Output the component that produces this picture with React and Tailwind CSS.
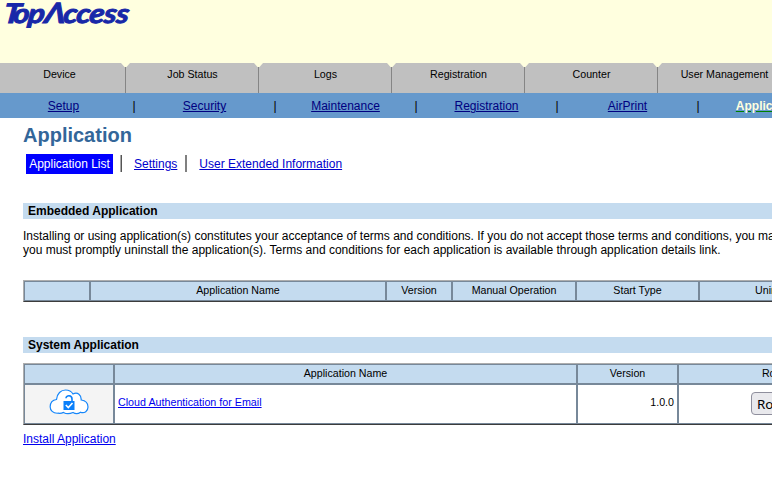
const tabs = ['Device', 'Job Status', 'Logs', 'Registration', 'Counter', 'User Management'];
const menu = ['Setup', 'Security', 'Maintenance', 'Registration', 'AirPrint'];

function Logo() {
  return (
    <svg className="block overflow-visible" width="140" height="34" role="img" aria-label="TopAccess">
      <g fill="#1828a8" stroke="#1828a8" strokeWidth="1" fontFamily="Lato, sans-serif" fontWeight="700" fontStyle="italic" transform="translate(0 23.3) skewX(-7) scale(1.15 1)">
        <text fontSize="27" x="2.6 10.8 23.8">Top</text>
        <text fontSize="28" x="38">Λ</text>
        <text fontSize="27" x="54.3 65.6 77 89.8 100.5">ccess</text>
      </g>
    </svg>
  );
}

function Tab({ label }) {
  return (
    <div className="relative w-[133px] shrink-0 h-[30px] bg-[#c0c0c0] border-r border-[#858585] text-center text-[10.67px] leading-[12px] pt-[5px] pl-px whitespace-nowrap">
      {label}
      <svg className="absolute top-0 -right-[5px] z-10" width="9" height="4" viewBox="0 0 9 4">
        <path d="M0 0H9L5.5 4H3.5Z" fill="#ffffdf" />
      </svg>
    </div>
  );
}

function CloudIcon() {
  return (
    <svg width="40" height="26" viewBox="0 0 40 26" fill="none">
      <path d="M9 24.2C4 24.6 1 21 1.2 17.5C1.3 13.5 4 11 7.5 10.5C8 4.5 12 1 16.5 1C20 1 22.5 2.5 24 5C28.5 2.5 32.5 6 32.2 11C36 11.5 39 14 39 18C39 22 35.5 24.8 31.5 23.2C29 25 26.5 25 24 23.5C20 25.3 17 25 14.5 23.4C13 24.2 11 24.5 9 24.2Z" fill="#fff" stroke="#1687fa" strokeWidth="1.2" />
      <path d="M17 9.2C17.2 5.8 23 6 23 10V13" stroke="#0b80fa" strokeWidth="1.6" />
      <rect x="14.5" y="12" width="11" height="9" fill="#0b80fa" />
      <path d="M16.8 16L19.3 18.5L23.5 14" stroke="#fff" strokeWidth="1.6" />
    </svg>
  );
}

function Section({ children }) {
  return <h2 className="h-4 bg-[#c4dbef] pl-[5px] text-[12px] leading-4 font-bold">{children}</h2>;
}

const frame = 'border border-t-[#adadad] border-l-[#adadad] border-b-[#3c3c3c] border-r-[#3c3c3c] w-fit';
const cell = 'border border-[#778899] shrink-0 flex items-center whitespace-nowrap';
const head = 'h-5 justify-center bg-[#c4dbef]';

function Head({ width, children }) {
  return <div className={`${cell} ${head} ${width}`}><span className="relative -top-px">{children}</span></div>;
}

export default function App() {
  return (
    <div className="w-[772px] h-[477px] overflow-hidden bg-white text-black font-['Liberation_Sans',Arial,sans-serif]">
      <header className="h-[63px] bg-[#ffffdf]">
        <Logo />
      </header>
      <nav className="flex -ml-[7px]">
        {tabs.map((t) => <Tab key={t} label={t} />)}
      </nav>
      <nav className="flex h-[25px] bg-[#6699cc] text-[12px] leading-[26px] whitespace-nowrap">
        {menu.map((m) => (
          <div key={m} className="flex shrink-0">
            <div className="w-[127px] text-center"><a className="underline text-[#000080]">{m}</a></div>
            <div className="w-[14px] text-center">|</div>
          </div>
        ))}
        <div className="w-[127px] shrink-0 text-center font-bold text-[#ffffdf]"><a className="underline decoration-[#008000]">Application</a></div>
      </nav>
      <main className="ml-[23px] w-[1000px]">
        <h1 className="pt-[5px] h-9 text-[20px] leading-6 font-bold text-[#336699]">Application</h1>
        <div className="flex h-5 ml-[3px] text-[12px] leading-5 text-[#0000cc]">
          <span className="w-[87px] text-center bg-[#0000ff] text-white">Application List</span>
          <span className="ml-[7px] mt-px h-[17px] w-[2px] border-l border-r border-l-[#aaaaaa] border-r-[#555555]" />
          <a className="underline ml-3">Settings</a>
          <span className="ml-2 mt-px h-[17px] w-[2px] bg-[#808080]" />
          <a className="underline ml-3">User Extended Information</a>
        </div>
        <div className="mt-[29px]"><Section>Embedded Application</Section></div>
        <p className="mt-[10px] text-[12px] leading-[14px] whitespace-nowrap">
          Installing or using application(s) constitutes your acceptance of terms and conditions. If you do not accept those terms and conditions, you may not use them and<br />
          you must promptly uninstall the application(s). Terms and conditions for each application is available through application details link.
        </p>
        <div className={`${frame} mt-[23px] flex text-[10.67px] leading-[12px]`}>
          <Head width="w-[66px]" />
          <Head width="w-[296px]">Application Name</Head>
          <Head width="w-[66px]">Version</Head>
          <Head width="w-[124px]">Manual Operation</Head>
          <Head width="w-[123px]">Start Type</Head>
          <Head width="w-[153px]">Uninstall</Head>
        </div>
        <div className="mt-[35px]"><Section>System Application</Section></div>
        <div className={`${frame} mt-[10px] text-[10.67px] leading-[12px]`}>
          <div className="flex">
            <Head width="w-[90px]" />
            <Head width="w-[463px]">Application Name</Head>
            <Head width="w-[101px]">Version</Head>
            <Head width="w-[204px]">Roles...</Head>
          </div>
          <div className="flex">
            <div className={`${cell} w-[90px] h-10 justify-center bg-[#f4f4f4]`}><div className="-mt-1"><CloudIcon /></div></div>
            <div className={`${cell} w-[463px] h-10 pl-[3px] pb-[5px]`}><a className="underline text-[10.72px] text-[#0000ee]">Cloud Authentication for Email</a></div>
            <div className={`${cell} w-[101px] h-10 pr-[3px] pb-[5px] justify-end`}>1.0.0</div>
            <div className={`${cell} w-[204px] h-10 justify-center`}>
              <button className="h-[23px] w-[60px] ml-[2px] mb-px rounded-[4px] border border-[#8f8f9d] bg-[#e9e9ed] pl-[5px] text-left font-['Noto_Sans',sans-serif] text-[13.33px] leading-[22px] overflow-hidden">Role...</button>
            </div>
          </div>
        </div>
        <a className="block mt-[7px] text-[12px] leading-[14px] underline text-[#0000ee]">Install Application</a>
      </main>
    </div>
  );
}
